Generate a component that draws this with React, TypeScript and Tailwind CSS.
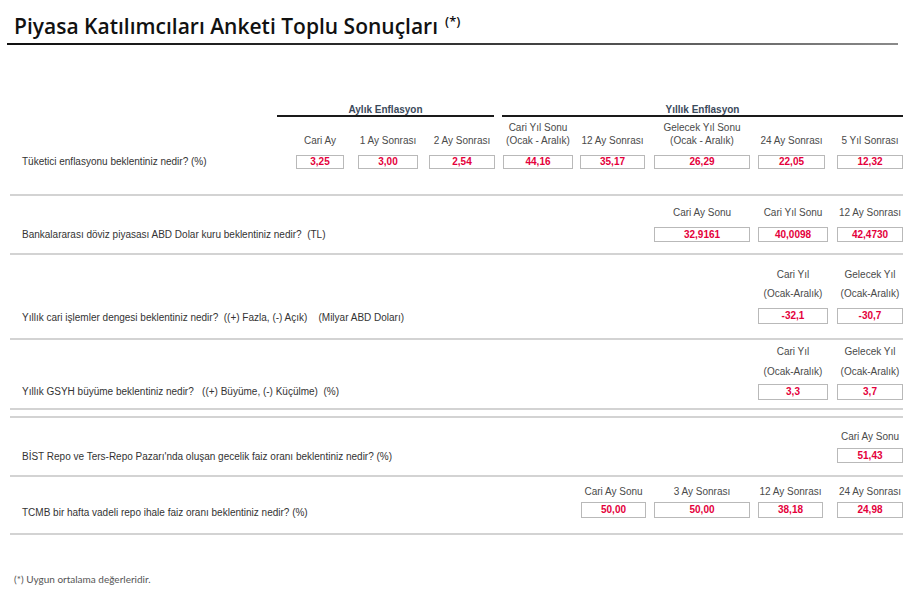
import React from "react";

type CellDef = { w: string; ml?: string; h: string[]; v: string };

const RED = "text-[#e4003b]";

function Section({
  label,
  cells,
  lh,
  gap,
  bh,
  pt,
  lc = "",
}: {
  label: string;
  cells: CellDef[];
  lh: string;
  gap: string;
  bh: string;
  pt: string;
  lc?: string;
}) {
  return (
    <div className={`flex items-end pl-[22px] pr-[19px] ${pt}`}>
      <div className={`flex-1 flex items-center whitespace-pre text-[10px] text-[#333] ${bh} ${lc}`}>{label}</div>
      {cells.map((c, i) => (
        <div key={i} className={`flex flex-col items-center ${c.w} ${c.ml ?? ""}`}>
          {c.h.map((t, j) => (
            <div key={j} className={`whitespace-nowrap text-center text-[10px] text-[#4a4a4a] ${lh}`}>
              {t}
            </div>
          ))}
          <div
            className={`w-full border border-[#b9b9b9] bg-white text-center text-[10px] font-bold ${RED} ${bh} ${gap}`}
          >
            <span className="block leading-[inherit]">{c.v}</span>
          </div>
        </div>
      ))}
    </div>
  );
}

function Sep({ mt }: { mt: string }) {
  return <div className={`ml-[10px] w-[893px] h-[2px] bg-[#d3d3d3] ${mt}`} />;
}

export default function App() {
  return (
    <div className="w-[922px] h-[602px] bg-white font-['Liberation_Sans',Arial,sans-serif] overflow-hidden">
      {/* Title */}
      <div className="h-[43px] pt-[7px] pl-[14px]">
        <div className="font-['Open_Sans',sans-serif] font-semibold text-[21px] leading-[29px] text-[#111] whitespace-nowrap">
          Piyasa Katılımcıları Anketi Toplu Sonuçları
          <span className="ml-[7px] text-[13px] align-super">(*)</span>
        </div>
      </div>
      <div className="ml-[7px] w-[891px] h-[2px] bg-linear-to-r from-[#111] via-[#333] to-[#8a8a8a]" />

      {/* Section 1 */}
      <div className="pt-[59px]">
        <div className="flex pl-[277px]">
          <div className="w-[217px] flex flex-col">
            <div className="h-[11px] leading-[11px] text-center text-[10px] font-bold text-[#3b4a5c]">Aylık Enflasyon</div>
            <div className="h-[2px] bg-[#1a1a1a]" />
          </div>
          <div className="ml-[8px] w-[401px] flex flex-col">
            <div className="h-[11px] leading-[11px] text-center text-[10px] font-bold text-[#3b4a5c]">Yıllık Enflasyon</div>
            <div className="h-[2px] bg-[#1a1a1a]" />
          </div>
        </div>
        <Section
          pt="pt-[4px]"
          lh="leading-[13px]"
          gap="mt-[8px]"
          bh="h-[14px] leading-[12px]"
          label="Tüketici enflasyonu beklentiniz nedir? (%)"
          cells={[
            { w: "w-[48px]", h: ["Cari Ay"], v: "3,25" },
            { w: "w-[60px]", ml: "ml-[14px]", h: ["1 Ay Sonrası"], v: "3,00" },
            { w: "w-[66px]", ml: "ml-[11px]", h: ["2 Ay Sonrası"], v: "2,54" },
            { w: "w-[70px]", ml: "ml-[8px]", h: ["Cari Yıl Sonu", "(Ocak - Aralık)"], v: "44,16" },
            { w: "w-[65px]", ml: "ml-[7px]", h: ["12 Ay Sonrası"], v: "35,17" },
            { w: "w-[96px]", ml: "ml-[9px]", h: ["Gelecek Yıl Sonu", "(Ocak - Aralık)"], v: "26,29" },
            { w: "w-[67px]", ml: "ml-[8px]", h: ["24 Ay Sonrası"], v: "22,05" },
            { w: "w-[66px]", ml: "ml-[12px]", h: ["5 Yıl Sonrası"], v: "12,32" },
          ]}
        />
      </div>
      <Sep mt="mt-[25px]" />

      {/* Section 2 */}
      <Section
        pt="pt-[10px]"
        lh="leading-[13px]"
        gap="mt-[8px]"
        bh="h-[15px] leading-[13px]"
        label="Bankalararası döviz piyasası ABD Dolar kuru beklentiniz nedir?  (TL)"
        cells={[
          { w: "w-[96px]", h: ["Cari Ay Sonu"], v: "32,9161" },
          { w: "w-[70px]", ml: "ml-[8px]", h: ["Cari Yıl Sonu"], v: "40,0098" },
          { w: "w-[66px]", ml: "ml-[9px]", h: ["12 Ay Sonrası"], v: "42,4730" },
        ]}
      />
      <Sep mt="mt-[11px]" />

      {/* Section 3 */}
      <Section
        pt="pt-[10px]"
        lh="leading-[19px]"
        gap="mt-[5px]"
        bh="h-[16px] leading-[14px]"
        lc="pt-[3px]"
        label="Yıllık cari işlemler dengesi beklentiniz nedir?  ((+) Fazla, (-) Açık)    (Milyar ABD Doları)"
        cells={[
          { w: "w-[70px]", h: ["Cari Yıl", "(Ocak-Aralık)"], v: "-32,1" },
          { w: "w-[66px]", ml: "ml-[9px]", h: ["Gelecek Yıl", "(Ocak-Aralık)"], v: "-30,7" },
        ]}
      />
      <Sep mt="mt-[14px]" />

      {/* Section 4 */}
      <Section
        pt="pt-[2px]"
        lh="leading-[20px]"
        gap="mt-[2px]"
        bh="h-[16px] leading-[14px]"
        label="Yıllık GSYH büyüme beklentiniz nedir?   ((+) Büyüme, (-) Küçülme)  (%)"
        cells={[
          { w: "w-[70px]", h: ["Cari Yıl", "(Ocak-Aralık)"], v: "3,3" },
          { w: "w-[66px]", ml: "ml-[9px]", h: ["Gelecek Yıl", "(Ocak-Aralık)"], v: "3,7" },
        ]}
      />
      <Sep mt="mt-[8px]" />
      <Sep mt="mt-[6px]" />

      {/* Section 5 */}
      <Section
        pt="pt-[12px]"
        lh="leading-[13px]"
        gap="mt-[5px]"
        bh="h-[15px] leading-[13px]"
        lc="pt-[2px]"
        label="BİST Repo ve Ters-Repo Pazarı'nda oluşan gecelik faiz oranı beklentiniz nedir? (%)"
        cells={[{ w: "w-[66px]", h: ["Cari Ay Sonu"], v: "51,43" }]}
      />
      <Sep mt="mt-[12px]" />

      {/* Section 6 */}
      <Section
        pt="pt-[8px]"
        lh="leading-[13px]"
        gap="mt-[4px]"
        bh="h-[16px] leading-[14px]"
        lc="pt-[5px]"
        label="TCMB bir hafta vadeli repo ihale faiz oranı beklentiniz nedir? (%)"
        cells={[
          { w: "w-[65px]", h: ["Cari Ay Sonu"], v: "50,00" },
          { w: "w-[96px]", ml: "ml-[8px]", h: ["3 Ay Sonrası"], v: "50,00" },
          { w: "w-[65px]", ml: "ml-[8px]", h: ["12 Ay Sonrası"], v: "38,18" },
          { w: "w-[66px]", ml: "ml-[14px]", h: ["24 Ay Sonrası"], v: "24,98" },
        ]}
      />
      <Sep mt="mt-[15px]" />

      {/* Footer */}
      <div className="mt-[38px] pl-[14px] font-['Lato',sans-serif] text-[10px] leading-[12px] text-[#555]">
        (*) Uygun ortalama değerleridir.
      </div>
    </div>
  );
}
